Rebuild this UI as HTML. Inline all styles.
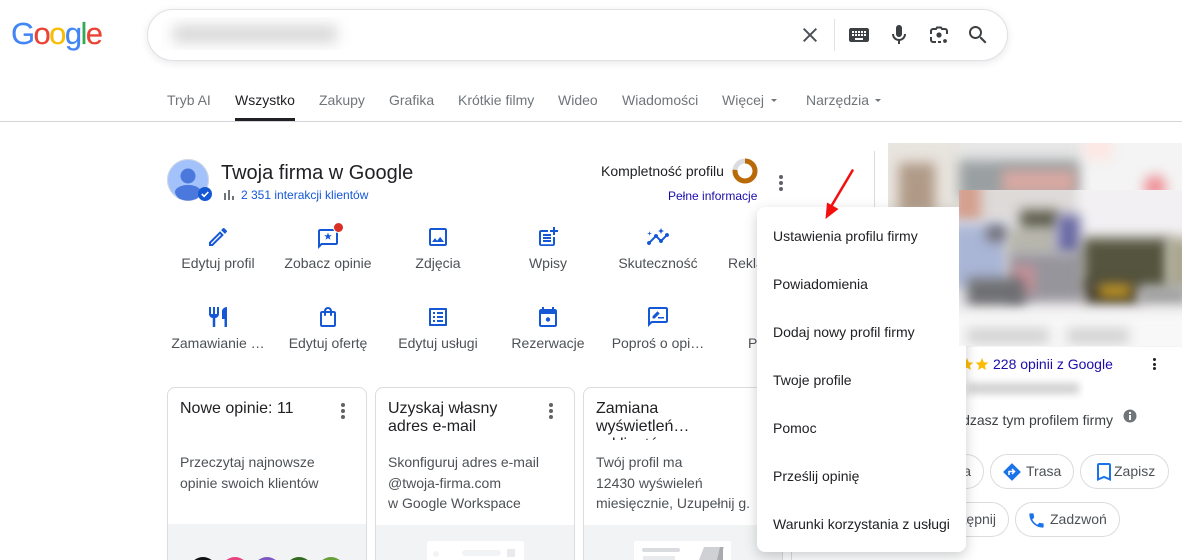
<!DOCTYPE html>
<html lang="pl"><head><meta charset="utf-8"><title>Twoja firma w Google</title>
<style>
*{box-sizing:border-box}
html,body{margin:0;padding:0;background:#fff;width:1182px;height:560px;overflow:hidden}
#root{position:relative;width:1182px;height:560px;overflow:hidden;font-family:"Liberation Sans",Arial,sans-serif;color:#202124}
.a{position:absolute;white-space:nowrap}
svg{display:block}
.tab{position:absolute;top:92px;font-size:14px;line-height:16px;color:#70757a;white-space:nowrap}
.ic{position:absolute;width:24px;height:24px;fill:#1558d6}
.lb{position:absolute;width:110px;text-align:center;font-size:14px;line-height:18px;color:#4d5156;white-space:nowrap}
.card{position:absolute;top:387px;width:200px;height:190px;border:1px solid #dadce0;border-radius:8px;background:#fff;overflow:hidden}
.card .t{position:absolute;left:12px;top:12px;width:150px;font-size:16px;line-height:18px;color:#202124;height:37px;overflow:hidden}
.card .d{position:absolute;left:12px;top:64px;font-size:14px;line-height:20.5px;color:#4d5156;white-space:nowrap}
.card .g{position:absolute;left:0;right:0;top:136px;bottom:0;background:#f1f3f4}
.keb{position:absolute;width:4px;height:16px}
.keb i{display:block;width:4px;height:4px;border-radius:50%;background:#5f6368;margin-bottom:2px}
.menu{position:absolute;left:757px;top:207px;width:209px;height:345px;background:#fff;border-radius:8px;box-shadow:0 4px 12px rgba(60,64,67,.25);z-index:5}
.menu div{position:absolute;left:16px;font-size:14px;line-height:18px;color:#202124;white-space:nowrap}
.btn{position:absolute;height:35px;border:1px solid #dadce0;border-radius:18px;background:#fff;font-size:14px;line-height:33px;color:#4d5156;white-space:nowrap}
.bl{position:absolute;filter:blur(6px)}
</style></head><body><div id="root">

<div class="a" style="left:11px;top:14px;font-size:31px;line-height:40px;letter-spacing:-1.6px;-webkit-text-stroke:.15px;width:95px">
<span style="color:#4285f4">G</span><span style="color:#ea4335">o</span><span style="color:#fbbc05">o</span><span style="color:#4285f4">g</span><span style="color:#34a853">l</span><span style="color:#ea4335">e</span></div>

<div class="a" style="left:147px;top:9px;width:861px;height:52px;border:1px solid #dfe1e5;border-radius:26px;background:#fff;box-shadow:0 2px 8px rgba(32,33,36,.1)"></div>
<div class="a" style="left:161px;top:17px;width:191px;height:33px;overflow:hidden;background:#fff"><div class="bl" style="left:12px;top:8px;width:164px;height:18px;background:#d8d8d8;filter:blur(7px)"></div></div>

<svg class="a" style="left:798px;top:23px;fill:#4d5156" width="24" height="24" viewBox="0 0 24 24"><path d="M19 6.41L17.59 5 12 10.59 6.41 5 5 6.41 10.59 12 5 17.59 6.41 19 12 13.41 17.59 19 19 17.59 13.41 12z"/></svg>
<div class="a" style="left:834px;top:19px;width:1px;height:32px;background:#dfe1e5"></div>
<svg class="a" style="left:847px;top:23px;fill:#3c4043" width="24" height="24" viewBox="0 0 24 24"><path d="M20 5H4c-1.100 0-1.990.9-1.990 2L2 17c0 1.100.9 2 2 2h16c1.100 0 2-.9 2-2V7c0-1.100-.9-2-2-2zm-9 3h2v2h-2V8zm0 3h2v2h-2v-2zM8 8h2v2H8V8zm0 3h2v2H8v-2zm-1 2H5v-2h2v2zm0-3H5V8h2v2zm9 7H8v-2h8v2zm0-4h-2v-2h2v2zm0-3h-2V8h2v2zm3 3h-2v-2h2v2zm0-3h-2V8h2v2z"/></svg>
<svg class="a" style="left:887px;top:23px;fill:#3c4043" width="24" height="24" viewBox="0 0 24 24"><path d="M12 14c1.660 0 3-1.340 3-3V5c0-1.660-1.340-3-3-3S9 3.340 9 5v6c0 1.660 1.340 3 3 3z"/><path d="M17 11c0 2.760-2.240 5-5 5s-5-2.240-5-5H5c0 3.530 2.610 6.430 6 6.920V21h2v-3.080c3.390-.49 6-3.390 6-6.920h-2z"/></svg>
<svg class="a" style="left:927px;top:23px" width="24" height="24" viewBox="0 0 24 24"><circle cx="12" cy="12" r="2.600" fill="#3c4043"/><circle cx="18" cy="18" r="1.900" fill="#3c4043"/><path d="M4 11V8a2 2 0 0 1 2-2h3l1-1.500h4L15 6h3a2 2 0 0 1 2 2v3M4 14v3a2 2 0 0 0 2 2h3M11 19h3" fill="none" stroke="#3c4043" stroke-width="2"/></svg>
<svg class="a" style="left:966px;top:23px;fill:#3c4043" width="24" height="24" viewBox="0 0 24 24"><path d="M15.500 14h-.79l-.28-.27A6.471 6.471 0 0 0 16 9.500 6.500 6.500 0 1 0 9.500 16c1.610 0 3.090-.59 4.230-1.570l.27.28v.79l5 4.990L20.490 19l-4.990-5zm-6 0C7.010 14 5 11.990 5 9.500S7.010 5 9.500 5 14 7.010 14 9.500 11.990 14 9.500 14z"/></svg>

<div class="tab" style="left:167px">Tryb AI</div>
<div class="tab" style="left:235px;color:#202124">Wszystko</div>
<div class="tab" style="left:319px">Zakupy</div>
<div class="tab" style="left:389px">Grafika</div>
<div class="tab" style="left:458px">Krótkie filmy</div>
<div class="tab" style="left:558px">Wideo</div>
<div class="tab" style="left:622px">Wiadomości</div>
<div class="tab" style="left:722px">Więcej</div>
<div class="a" style="left:771px;top:99px;border:3.500px solid transparent;border-top:3.500px solid #70757a;border-bottom:0"></div>
<div class="tab" style="left:806px">Narzędzia</div>
<div class="a" style="left:875px;top:99px;border:3.500px solid transparent;border-top:3.500px solid #70757a;border-bottom:0"></div>
<div class="a" style="left:235px;top:118px;width:60px;height:3px;background:#202124"></div>
<div class="a" style="left:0;top:121px;width:1182px;height:1px;background:#d2d4d7"></div>

<svg class="a" style="left:167px;top:159px" width="46" height="44" viewBox="0 0 46 44"><circle cx="21" cy="21" r="21" fill="#a3c2fb"/><circle cx="21" cy="21" r="20.500" fill="none" stroke="#d5d9e0"/><circle cx="21" cy="17" r="7.500" fill="#4a78dd"/><path d="M8 33c0-4 6-7 13-7s13 3 13 7c0 2-2 5-4 6.500a21 21 0 0 1-18 0C10 38 8 35 8 33z" fill="#4a78dd"/><circle cx="38" cy="35" r="7" fill="#1558d6"/><path d="M34.800 35l2.300 2.300 4.200-4.300" fill="none" stroke="#fff" stroke-width="1.600"/></svg>
<div class="a" style="left:221px;top:161px;font-size:20px;line-height:24px;color:#202124">Twoja firma w Google</div>
<div class="a" style="left:224px;top:193px;width:2px;height:7px;background:#70757a"></div>
<div class="a" style="left:228px;top:190px;width:2px;height:10px;background:#70757a"></div>
<div class="a" style="left:232px;top:196px;width:2px;height:4px;background:#70757a"></div>
<div class="a" style="left:241px;top:188px;font-size:12px;line-height:14px;color:#1558d6">2 351 interakcji klientów</div>

<div class="a" style="left:601px;top:163px;font-size:14px;line-height:16px;color:#202124">Kompletność profilu</div>
<svg class="a" style="left:732px;top:158px" width="26" height="26" viewBox="0 0 26 26"><circle cx="13" cy="13" r="10" fill="none" stroke="#dadce0" stroke-width="5"/><circle cx="13" cy="13" r="10" fill="none" stroke="#b96a06" stroke-width="5" stroke-dasharray="48 63" transform="rotate(-90 13 13)"/></svg>
<div class="a" style="left:668px;top:189px;font-size:12px;line-height:14px;color:#1a0dab">Pełne informacje</div>
<div class="keb" style="left:779px;top:175px"><i></i><i></i><i></i></div>
<div class="a" style="left:874px;top:151px;width:1px;height:60px;background:#dadce0"></div>

<svg class="ic" style="left:206px;top:225px" viewBox="0 0 24 24"><path d="M3 17.250V21h3.750L17.810 9.940l-3.750-3.750L3 17.250zM5.920 19H5v-.92l9.060-9.060.92.92L5.920 19zM20.710 7.040c.39-.39.39-1.020 0-1.410l-2.340-2.340c-.39-.39-1.020-.39-1.410 0l-1.830 1.830 3.750 3.750 1.830-1.830z"/></svg>
<svg class="ic" style="left:316px;top:225px" viewBox="0 0 24 24"><path d="M20 4H4c-1.100 0-2 .9-2 2v18l4-4h14c1.100 0 2-.9 2-2V6c0-1.100-.9-2-2-2zm0 14H5.170L4 19.170V6h16v12z"/><path d="M12 7.500l1 2.700 2.800.1-2.200 1.700.8 2.700-2.400-1.600-2.400 1.600.8-2.700-2.200-1.700 2.800-.1z"/></svg>
<div class="a" style="left:334px;top:223px;width:9px;height:9px;border-radius:50%;background:#d93025;box-shadow:0 0 0 1px #fff"></div>
<svg class="ic" style="left:426px;top:225px" viewBox="0 0 24 24"><path d="M19 5v14H5V5h14m0-2H5c-1.100 0-2 .9-2 2v14c0 1.100.9 2 2 2h14c1.100 0 2-.9 2-2V5c0-1.100-.9-2-2-2zm-4.860 8.860l-3 3.870L9 13.140 6 17h12l-3.860-5.140z"/></svg>
<svg class="ic" style="left:536px;top:225px" viewBox="0 0 24 24"><path d="M17 19.220H5V7h7V5H5c-1.100 0-2 .9-2 2v12c0 1.100.9 2 2 2h12c1.100 0 2-.9 2-2v-7h-2v7.220zM19 2h-2v3h-3c.01.01 0 2 0 2h3v2.990c.01.01 2 0 2 0V7h3V5h-3V2zM7 9h8v2H7zM7 12v2h8v-2h-3zM7 15h8v2H7z"/></svg>
<svg class="ic" style="left:646px;top:225px" viewBox="0 0 24 24"><path d="M21 8c-1.450 0-2.260 1.440-1.930 2.510l-3.550 3.560c-.3-.09-.74-.09-1.040 0l-2.550-2.550C12.270 10.450 11.460 9 10 9c-1.450 0-2.270 1.440-1.930 2.520l-4.560 4.550C2.440 15.740 1 16.550 1 18c0 1.100.9 2 2 2 1.450 0 2.260-1.440 1.930-2.510l4.550-4.560c.3.09.74.09 1.040 0l2.550 2.550C12.730 16.550 13.540 18 15 18c1.450 0 2.270-1.440 1.930-2.520l3.560-3.550c1.070.33 2.510-.48 2.510-1.930 0-1.100-.9-2-2-2z"/><path d="M15 9l.94-2.070L18 6l-2.060-.93L15 3l-.92 2.070L12 6l2.080.93zM3.500 11L4 9l2-.5L4 8l-.5-2L3 8l-2 .5L3 9z"/></svg>

<div class="lb" style="left:163px;top:254px">Edytuj profil</div>
<div class="lb" style="left:273px;top:254px">Zobacz opinie</div>
<div class="lb" style="left:383px;top:254px">Zdjęcia</div>
<div class="lb" style="left:493px;top:254px">Wpisy</div>
<div class="lb" style="left:603px;top:254px">Skuteczność</div>
<div class="a" style="left:728px;top:254px;font-size:14px;line-height:18px;color:#4d5156">Reklamy</div>

<svg class="ic" style="left:206px;top:305px" viewBox="0 0 24 24"><path d="M11 9H9V2H7v7H5V2H3v7c0 2.120 1.660 3.840 3.750 3.970V22h2.500v-9.030C11.340 12.840 13 11.120 13 9V2h-2v7zm5-3v8h2.500v8H21V2c-2.760 0-5 2.240-5 4z"/></svg>
<svg class="ic" style="left:316px;top:305px" viewBox="0 0 24 24"><path d="M18 6h-2c0-2.210-1.790-4-4-4S8 3.790 8 6H6c-1.100 0-2 .9-2 2v12c0 1.100.9 2 2 2h12c1.100 0 2-.9 2-2V8c0-1.100-.9-2-2-2zm-6-2c1.100 0 2 .9 2 2h-4c0-1.100.9-2 2-2zm6 16H6V8h2v2c0 .55.45 1 1 1s1-.45 1-1V8h4v2c0 .55.45 1 1 1s1-.45 1-1V8h2v12z"/></svg>
<svg class="ic" style="left:426px;top:305px" viewBox="0 0 24 24"><path d="M19 5v14H5V5h14m1.100-2H3.900c-.5 0-.9.4-.9.9v16.200c0 .4.4.9.9.9h16.200c.4 0 .9-.5.9-.9V3.900c0-.5-.5-.9-.9-.9zM11 7h6v2h-6V7zm0 4h6v2h-6v-2zm0 4h6v2h-6zM7 7h2v2H7zm0 4h2v2H7zm0 4h2v2H7z"/></svg>
<svg class="ic" style="left:536px;top:305px" viewBox="0 0 24 24"><path d="M19 4h-1V2h-2v2H8V2H6v2H5c-1.100 0-2 .9-2 2v14c0 1.100.9 2 2 2h14c1.100 0 2-.9 2-2V6c0-1.100-.9-2-2-2zm0 16H5V9h14v11z"/><circle cx="12" cy="14.500" r="2.200"/></svg>
<svg class="ic" style="left:646px;top:305px" viewBox="0 0 24 24"><path d="M20 2H4c-1.100 0-2 .9-2 2v18l4-4h14c1.100 0 2-.9 2-2V4c0-1.100-.9-2-2-2zm0 14H5.170L4 17.170V4h16v12z"/><path d="M6.500 13.500v-2.200l5-5 2.200 2.200-5 5zM12 12h6v1.500h-6z"/></svg>

<div class="lb" style="left:163px;top:334px">Zamawianie …</div>
<div class="lb" style="left:273px;top:334px">Edytuj ofertę</div>
<div class="lb" style="left:383px;top:334px">Edytuj usługi</div>
<div class="lb" style="left:493px;top:334px">Rezerwacje</div>
<div class="lb" style="left:603px;top:334px">Poproś o opi…</div>
<div class="a" style="left:748px;top:334px;font-size:14px;line-height:18px;color:#4d5156">Poleć</div>

<div class="card" style="left:167px"><div class="t">Nowe opinie: 11</div><div class="d">Przeczytaj najnowsze<br>opinie swoich klientów</div><div class="g"></div></div>
<div class="keb" style="left:341px;top:403px"><i></i><i></i><i></i></div>
<div class="a" style="left:189px;top:557px;width:28px;height:28px;border-radius:50%;background:#111"></div>
<div class="a" style="left:221px;top:557px;width:28px;height:28px;border-radius:50%;background:#e8437f"></div>
<div class="a" style="left:253px;top:557px;width:28px;height:28px;border-radius:50%;background:#7e57c2"></div>
<div class="a" style="left:285px;top:557px;width:28px;height:28px;border-radius:50%;background:#33691e"></div>
<div class="a" style="left:317px;top:557px;width:28px;height:28px;border-radius:50%;background:#689f38"></div>

<div class="card" style="left:375px"><div class="t">Uzyskaj własny adres e-mail</div><div class="d">Skonfiguruj adres e-mail<br>@twoja-firma.com<br>w Google Workspace</div><div class="g" style="top:137px"></div></div>
<div class="keb" style="left:549px;top:403px"><i></i><i></i><i></i></div>
<div class="a" style="left:427px;top:541px;width:97px;height:30px;background:#fff;border-radius:2px"></div>
<div class="a" style="left:433px;top:551px;width:6px;height:6px;border-radius:50%;background:#f1f3f4"></div>
<div class="a" style="left:462px;top:550px;width:39px;height:6px;border-radius:3px;background:#f1f3f4"></div>
<div class="a" style="left:507px;top:549px;width:8px;height:8px;background:#e8eaed"></div>

<div class="card" style="left:583px"><div class="t" style="height:40px">Zamiana wyświetleń…<br>w klientów</div><div class="d">Twój profil ma<br>12430 wyświeleń<br>miesięcznie, Uzupełnij g.</div><div class="g" style="top:137px"></div></div>
<div class="a" style="left:634px;top:541px;width:97px;height:30px;background:#fff;border-radius:2px"></div>
<div class="a" style="left:642px;top:548px;width:38px;height:4px;border-radius:2px;background:#dadce0"></div>
<div class="a" style="left:643px;top:556px;width:32px;height:4px;background:#e8eaed"></div>
<svg class="a" style="left:698px;top:546px" width="28" height="14" viewBox="0 0 28 14"><path d="M6 1h20l-4 13H1z" fill="#cfd1d4"/><path d="M22 1h3v13h-6z" fill="#a9abae"/></svg>
<div class="a" style="left:791px;top:540px;width:20px;height:30px;border:1px solid #dadce0;border-radius:8px 0 0 0;border-right:0"></div>

<div class="a" style="left:888px;top:143px;width:294px;height:204px;overflow:hidden;background:#f4f4f4">
  <div class="bl" style="left:-10px;top:-10px;width:90px;height:90px;background:#e8e4de"></div>
  <div class="bl" style="left:11px;top:20px;width:36px;height:50px;background:#b09a87"></div>
  <div class="bl" style="left:71px;top:-8px;width:124px;height:30px;background:#e6e6e6"></div>
  <div class="bl" style="left:71px;top:17px;width:120px;height:40px;background:#9aa0a2"></div>
  <div class="bl" style="left:114px;top:27px;width:73px;height:24px;background:#d8a8a2"></div>
  <div class="bl" style="left:197px;top:-6px;width:27px;height:22px;background:#fde6e2"></div>
  <div class="bl" style="left:256px;top:32px;width:22px;height:24px;border-radius:50%;background:#ee8f96"></div>
</div>

<svg class="a" style="left:959px;top:357px" width="30" height="14" viewBox="0 0 30 14" fill="#fbbc04"><path d="M8 1l1.800 4.200 4.500.4-3.400 3 1 4.400L8 10.600 4.100 13l1-4.400-3.400-3 4.500-.4z"/><path d="M23 1l1.800 4.200 4.500.4-3.400 3 1 4.400-3.900-2.400-3.900 2.400 1-4.400-3.400-3 4.500-.4z"/></svg>
<div class="a" style="left:993px;top:356px;font-size:14px;line-height:16px;color:#1a0dab">228 opinii z Google</div>
<div class="keb" style="left:1152.500px;top:358px;width:3px;height:12px"><i style="width:3px;height:3px;margin-bottom:1.500px;background:#202124"></i><i style="width:3px;height:3px;margin-bottom:1.500px;background:#202124"></i><i style="width:3px;height:3px;background:#202124"></i></div>
<div class="a" style="left:962px;top:376px;width:122px;height:24px;overflow:hidden;background:#fff"><div class="bl" style="left:5px;top:7px;width:112px;height:11px;background:#d0d0d0;filter:blur(4px)"></div></div>
<div class="a" style="left:900px;top:412px;width:213px;text-align:right;font-size:14px;line-height:16px;color:#3c4043">Zarządzasz tym profilem firmy</div>
<svg class="a" style="left:1123px;top:409px" width="14" height="14" viewBox="0 0 14 14"><circle cx="7" cy="7" r="6.500" fill="#70757a"/><path d="M6 6h2v5H6zM6 3h2v2H6z" fill="#fff"/></svg>

<div class="btn" style="left:900px;top:454px;width:84px;text-align:right;padding-right:12px">Witryna</div>
<div class="btn" style="left:990px;top:454px;width:84px;padding-left:35px">Trasa</div>
<svg class="a" style="left:1003px;top:463px" width="18" height="18" viewBox="0 0 18 18"><path d="M9 .8l8.200 8.200L9 17.200.8 9z" fill="#1a73e8" stroke="#1a73e8" stroke-linejoin="round"/><path d="M6 12V8.500h4.500M9 6l2.500 2.500L9 11" fill="none" stroke="#fff" stroke-width="1.500"/></svg>
<div class="btn" style="left:1080px;top:454px;width:89px;padding-left:33px">Zapisz</div>
<svg class="a" style="left:1097px;top:463px;fill:#1a73e8" width="14" height="18" viewBox="5 3 14 18" preserveAspectRatio="none"><path d="M17 3H7c-1.100 0-2 .9-2 2v16l7-3 7 3V5c0-1.100-.9-2-2-2zm0 15l-5-2.180L7 18V5h10v13z"/></svg>
<div class="btn" style="left:900px;top:502px;width:109px;text-align:right;padding-right:12px">Udostępnij</div>
<div class="btn" style="left:1015px;top:502px;width:105px;padding-left:34px">Zadzwoń</div>
<svg class="a" style="left:1027px;top:511px;fill:#1a73e8" width="19" height="19" viewBox="0 0 24 24"><path d="M6.620 10.790c1.440 2.830 3.760 5.140 6.590 6.590l2.200-2.200c.27-.27.67-.36 1.020-.24 1.120.37 2.330.57 3.570.57.55 0 1 .45 1 1V20c0 .55-.45 1-1 1-9.390 0-17-7.610-17-17 0-.55.45-1 1-1h3.500c.55 0 1 .45 1 1 0 1.250.2 2.450.57 3.570.11.35.03.74-.25 1.020l-2.200 2.200z"/></svg>

<div class="menu">
<div style="top:20px">Ustawienia profilu firmy</div>
<div style="top:68px">Powiadomienia</div>
<div style="top:116px">Dodaj nowy profil firmy</div>
<div style="top:164px">Twoje profile</div>
<div style="top:212px">Pomoc</div>
<div style="top:260px">Prześlij opinię</div>
<div style="top:308px">Warunki korzystania z usługi</div>
</div>

<div class="a" style="left:959px;top:190px;width:223px;height:156px;overflow:hidden;background:#eceaec;z-index:6">
  <div class="bl" style="left:-10px;top:-10px;width:130px;height:40px;background:#dddad8"></div>
  <div class="bl" style="left:-6px;top:-10px;width:28px;height:40px;background:#d49f8e"></div>
  <div class="bl" style="left:120px;top:-10px;width:120px;height:54px;background:#f2f0f2"></div>
  <div class="bl" style="left:-10px;top:34px;width:58px;height:64px;background:#aab6d6"></div>
  <div class="bl" style="left:48px;top:38px;width:50px;height:28px;background:#b9b8ae"></div>
  <div class="bl" style="left:61px;top:20px;width:38px;height:18px;background:#5c5c4a"></div>
  <div class="bl" style="left:98px;top:25px;width:23px;height:40px;background:#6a6aa4"></div>
  <div class="bl" style="left:28px;top:36px;width:18px;height:15px;background:#6e686e"></div>
  <div class="bl" style="left:50px;top:62px;width:74px;height:50px;background:#96959c"></div>
  <div class="bl" style="left:54px;top:75px;width:22px;height:28px;background:#c8929a"></div>
  <div class="bl" style="left:8px;top:88px;width:58px;height:28px;background:#6e6f72"></div>
  <div class="bl" style="left:124px;top:48px;width:86px;height:52px;background:#55553f"></div>
  <div class="bl" style="left:208px;top:48px;width:24px;height:52px;background:#a8a58e"></div>
  <div class="bl" style="left:126px;top:92px;width:54px;height:22px;background:#403a2e"></div>
  <div class="bl" style="left:140px;top:95px;width:32px;height:12px;background:#d0a020"></div>
  <div class="bl" style="left:180px;top:96px;width:50px;height:18px;background:#a0a0a0"></div>
  <div class="bl" style="left:-10px;top:122px;width:250px;height:50px;background:#f8f8f8"></div>
  <div class="bl" style="left:8px;top:138px;width:82px;height:16px;background:#d2d2d2"></div>
  <div class="bl" style="left:108px;top:138px;width:62px;height:16px;background:#d2d2d2"></div>
</div>

<svg class="a" style="left:815px;top:165px;z-index:7" width="45" height="60" viewBox="0 0 45 60"><path d="M37.500 5.500L17 40" stroke="#f40f0f" stroke-width="2.500" stroke-linecap="round" fill="none"/><path d="M10.500 54l1.500-16.500 11.500 6.500z" fill="#f40f0f"/></svg>

</div></body></html>
